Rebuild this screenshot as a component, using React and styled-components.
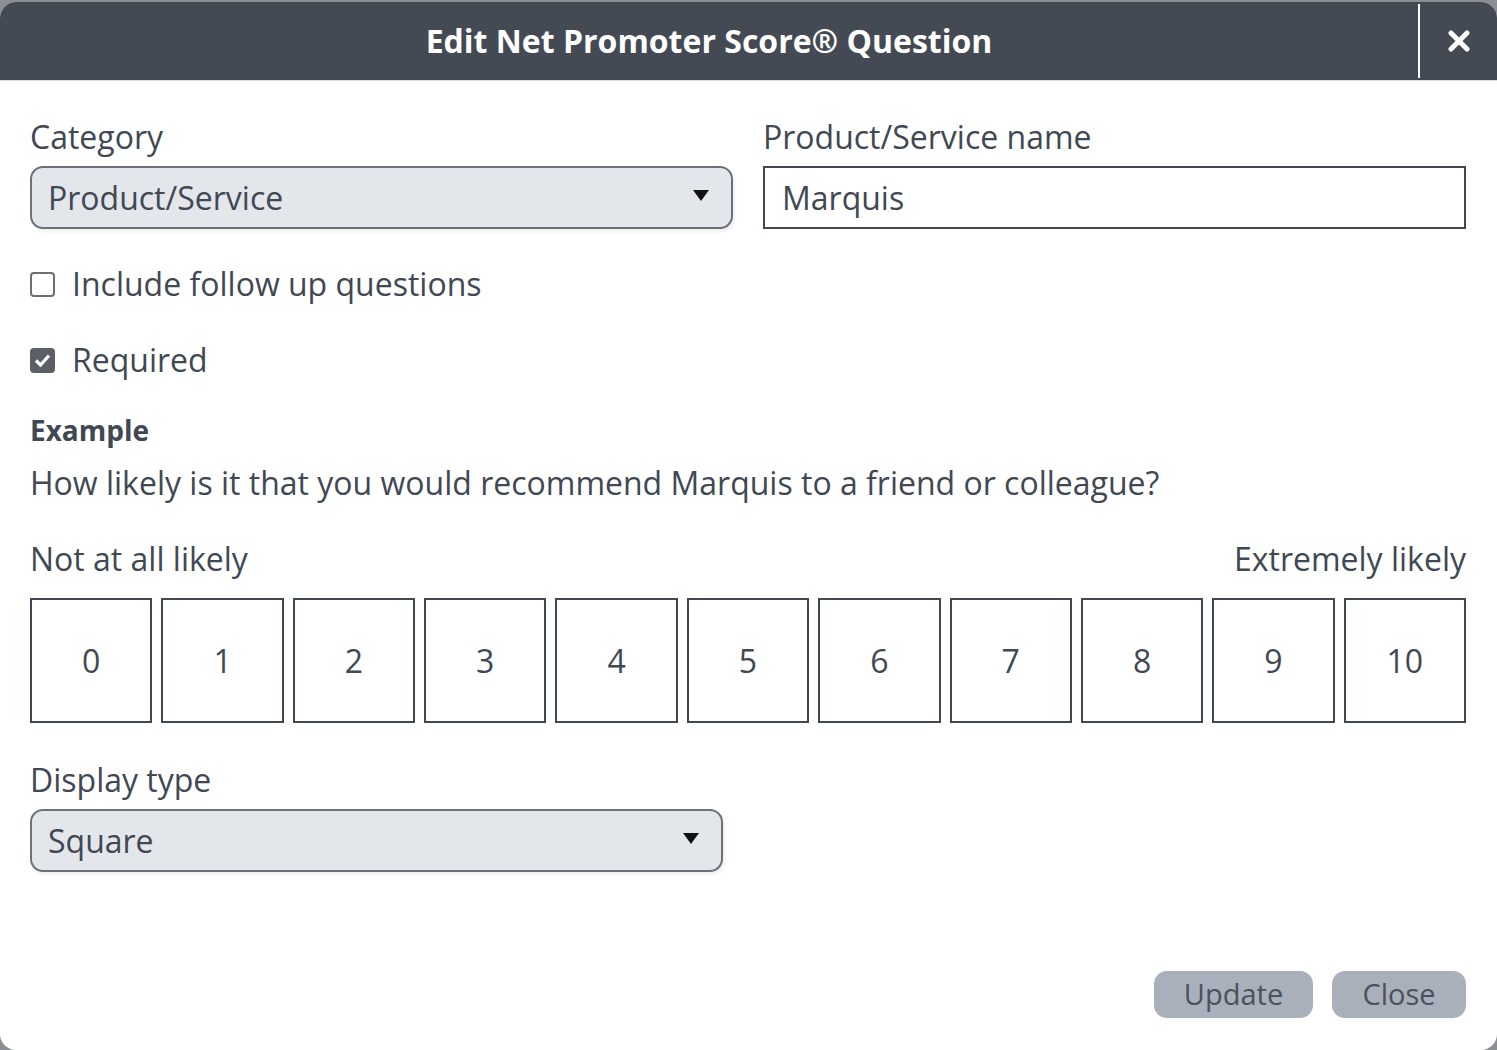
import React, { useState } from 'react';
import styled, { createGlobalStyle } from 'styled-components';

const Global = createGlobalStyle`
  html, body {
    margin: 0;
    padding: 0;
    background: #8b8e93;
  }
  body {
    font-family: 'Open Sans', 'Noto Sans', sans-serif;
    color: #3f4853;
  }
  * { box-sizing: border-box; }
`;

const Modal = styled.div`
  margin-top: 2px;
  width: 1497px;
  height: 1048px;
  background: #fff;
  border-radius: 16px;
  overflow: hidden;
  display: flex;
  flex-direction: column;
`;

const Header = styled.div`
  height: 79px;
  background: #434a54;
  display: flex;
  align-items: stretch;
  border-bottom: 1px solid #d9dbde;
`;

const Title = styled.h1`
  flex: 1;
  margin: 0;
  display: flex;
  align-items: center;
  justify-content: center;
  color: #fff;
  font-size: 32px;
  font-weight: 700;
  padding-bottom: 2px;
`;

const CloseX = styled.button`
  width: 79px;
  border: none;
  border-left: 2px solid #fff;
  margin: 2px 0;
  background: transparent;
  display: flex;
  align-items: center;
  justify-content: center;
  cursor: pointer;
  padding: 0;
`;

const Body = styled.div`
  flex: 1;
  padding: 35px 31px 32px 30px;
  display: flex;
  flex-direction: column;
`;

const Row = styled.div`
  display: grid;
  grid-template-columns: 1fr 1fr;
  gap: 30px;
`;

const Field = styled.div`
  display: flex;
  flex-direction: column;
`;

const Label = styled.label`
  font-size: 32px;
  line-height: 42px;
  margin-bottom: 8px;
`;

const SelectBox = styled.div`
  height: 63px;
  width: ${p => p.$width || '100%'};
  background: #e3e6eb;
  border: 2px solid #6b717b;
  border-radius: 13px;
  box-shadow: 2px 3px 3px rgba(0, 0, 0, 0.06);
  display: flex;
  align-items: center;
  justify-content: space-between;
  padding: 0 22px 0 16px;
  font-size: 32px;
  color: #3f4853;
`;

const Caret = styled.span`
  width: 0;
  height: 0;
  border-left: 8px solid transparent;
  border-right: 8px solid transparent;
  border-top: 11px solid #111;
  margin-top: -4px;
`;

const TextInput = styled.input`
  height: 63px;
  border: 2px solid #3f4853;
  border-radius: 0;
  padding: 0 17px;
  font-family: inherit;
  font-size: 32px;
  color: #3f4853;
  outline: none;
`;

const Check = styled.label`
  display: flex;
  align-items: center;
  gap: 17px;
  font-size: 32px;
  line-height: 42px;
  margin-top: ${p => p.$mt}px;
  cursor: pointer;
`;

const Box = styled.span`
  width: 25px;
  height: 25px;
  border-radius: 4px;
  border: 2px solid ${p => (p.$on ? '#5b5f66' : '#6b6f76')};
  background: ${p => (p.$on ? '#5b5f66' : '#fff')};
  display: flex;
  align-items: center;
  justify-content: center;
`;

const SubHead = styled.div`
  font-size: 28px;
  font-weight: 700;
  line-height: 36px;
  margin-top: 31px;
`;

const Question = styled.div`
  font-size: 32px;
  line-height: 42px;
  margin-top: 14px;
`;

const Ends = styled.div`
  display: flex;
  justify-content: space-between;
  font-size: 32px;
  line-height: 42px;
  margin-top: 34px;
`;

const Scale = styled.div`
  display: grid;
  grid-template-columns: repeat(11, 1fr);
  gap: 9px;
  margin-top: 18px;
`;

const ScoreCell = styled.div`
  height: 125px;
  border: 2px solid #3f4853;
  display: flex;
  align-items: center;
  justify-content: center;
  font-size: 32px;
`;

const DisplayField = styled(Field)`
  margin-top: 36px;
`;

const Footer = styled.div`
  margin-top: auto;
  display: flex;
  justify-content: flex-end;
  gap: 19px;
`;

const Btn = styled.button`
  height: 47px;
  min-width: ${p => p.$w}px;
  border: none;
  border-radius: 13px;
  background: #a9b0bb;
  color: #4a525d;
  font-family: inherit;
  font-size: 29px;
  padding: 0 22px 2px;
  cursor: pointer;
`;

export default function App() {
  const [follow, setFollow] = useState(false);
  const [required, setRequired] = useState(true);
  const [name, setName] = useState('Marquis');

  return (
    <>
      <Global />
      <Modal>
        <Header>
          <Title>Edit Net Promoter Score® Question</Title>
          <CloseX aria-label="Close">
            <svg width="22" height="22" viewBox="0 0 22 22">
              <path d="M3 3 L19 19 M19 3 L3 19" stroke="#fff" strokeWidth="5" strokeLinecap="round" />
            </svg>
          </CloseX>
        </Header>
        <Body>
          <Row>
            <Field>
              <Label>Category</Label>
              <SelectBox>
                Product/Service
                <Caret />
              </SelectBox>
            </Field>
            <Field>
              <Label>Product/Service name</Label>
              <TextInput value={name} onChange={e => setName(e.target.value)} />
            </Field>
          </Row>

          <Check $mt={34} onClick={() => setFollow(!follow)}>
            <Box $on={follow}>
              {follow && (
                <svg width="17" height="14" viewBox="0 0 17 14">
                  <path d="M2 7.5 L6.5 12 L15 2.5" stroke="#fff" strokeWidth="3.2" fill="none" />
                </svg>
              )}
            </Box>
            Include follow up questions
          </Check>
          <Check $mt={34} onClick={() => setRequired(!required)}>
            <Box $on={required}>
              {required && (
                <svg width="17" height="14" viewBox="0 0 17 14">
                  <path d="M2 7.5 L6.5 12 L15 2.5" stroke="#fff" strokeWidth="3.2" fill="none" />
                </svg>
              )}
            </Box>
            Required
          </Check>

          <SubHead>Example</SubHead>
          <Question>How likely is it that you would recommend {name} to a friend or colleague?</Question>

          <Ends>
            <span>Not at all likely</span>
            <span>Extremely likely</span>
          </Ends>
          <Scale>
            {Array.from({ length: 11 }, (_, i) => (
              <ScoreCell key={i}>{i}</ScoreCell>
            ))}
          </Scale>

          <DisplayField>
            <Label>Display type</Label>
            <SelectBox $width="693px">
              Square
              <Caret />
            </SelectBox>
          </DisplayField>

          <Footer>
            <Btn $w={159}>Update</Btn>
            <Btn $w={134}>Close</Btn>
          </Footer>
        </Body>
      </Modal>
    </>
  );
}
